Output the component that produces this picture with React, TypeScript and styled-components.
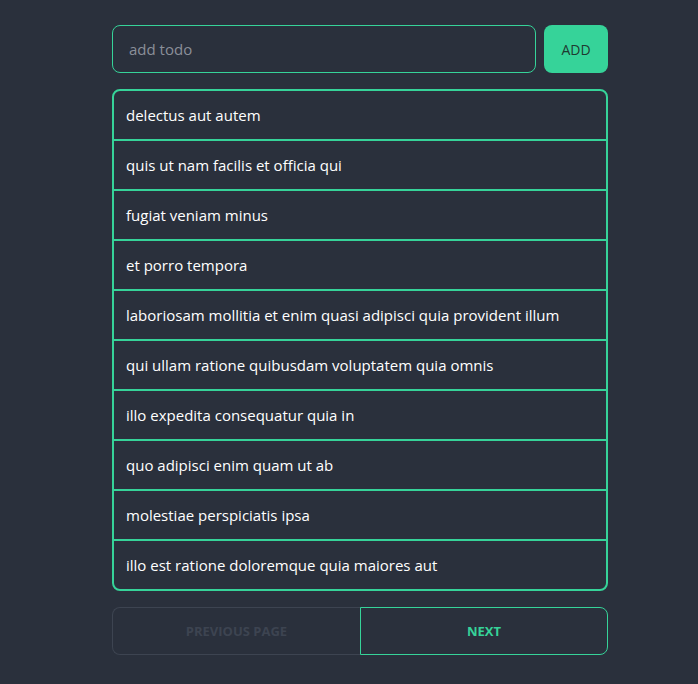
import React from "react";
import styled, { createGlobalStyle } from "styled-components";

const Global = createGlobalStyle`
  html, body { margin: 0; padding: 0; background: #2a303c; }
  body { font-family: "Open Sans", "Noto Sans", sans-serif; color: #fff; }
  * { box-sizing: border-box; }
`;

const Page = styled.div`
  min-height: 684px;
  display: flex;
  justify-content: center;
  padding: 25px 0 0 22px;
`;

const Column = styled.div`
  width: 496px;
  display: flex;
  flex-direction: column;
  gap: 16px;
`;

const Form = styled.form`
  display: flex;
  gap: 8px;
`;

const Input = styled.input`
  flex: 1;
  height: 48px;
  border: 1px solid #36d399;
  border-radius: 8px;
  background: #2a303c;
  color: #fff;
  padding: 0 16px;
  font-family: inherit;
  font-size: 15px;
  outline: none;
  &::placeholder { color: #8a8f99; }
`;

const AddButton = styled.button`
  width: 64px;
  height: 48px;
  border: none;
  border-radius: 8px;
  background: #36d399;
  color: #1f3a31;
  font-family: inherit;
  font-size: 14px;
  font-weight: 500;
  text-transform: uppercase;
`;

const List = styled.ul`
  list-style: none;
  margin: 0;
  padding: 0;
  border: 2px solid #36d399;
  border-radius: 8px;
  overflow: hidden;
`;

const Item = styled.li`
  height: 50px;
  display: flex;
  align-items: center;
  padding: 0 12px 1px;
  font-size: 15px;
  color: #fff;
  border-top: 2px solid #36d399;
  &:first-child { border-top: none; height: 48px; }
`;

const Pager = styled.div`
  display: grid;
  grid-template-columns: 1fr 1fr;
  height: 48px;
`;

const PageButton = styled.button<{ $active?: boolean }>`
  height: 48px;
  background: #2a303c;
  font-family: inherit;
  font-size: 13px;
  font-weight: 700;
  text-transform: uppercase;
  border: 1px solid ${(p) => (p.$active ? "#36d399" : "#3d4451")};
  color: ${(p) => (p.$active ? "#36d399" : "#3d4451")};
  border-radius: ${(p) => (p.$active ? "0 8px 8px 0" : "8px 0 0 8px")};
  ${(p) => (p.$active ? "" : "border-right: none;")}
`;

const todos = [
  "delectus aut autem",
  "quis ut nam facilis et officia qui",
  "fugiat veniam minus",
  "et porro tempora",
  "laboriosam mollitia et enim quasi adipisci quia provident illum",
  "qui ullam ratione quibusdam voluptatem quia omnis",
  "illo expedita consequatur quia in",
  "quo adipisci enim quam ut ab",
  "molestiae perspiciatis ipsa",
  "illo est ratione doloremque quia maiores aut",
];

export default function App() {
  return (
    <>
      <Global />
      <Page>
        <Column>
          <Form onSubmit={(e) => e.preventDefault()}>
            <Input placeholder="add todo" />
            <AddButton type="submit">Add</AddButton>
          </Form>
          <List>
            {todos.map((t) => (
              <Item key={t}>{t}</Item>
            ))}
          </List>
          <Pager>
            <PageButton disabled>Previous page</PageButton>
            <PageButton $active>Next</PageButton>
          </Pager>
        </Column>
      </Page>
    </>
  );
}
